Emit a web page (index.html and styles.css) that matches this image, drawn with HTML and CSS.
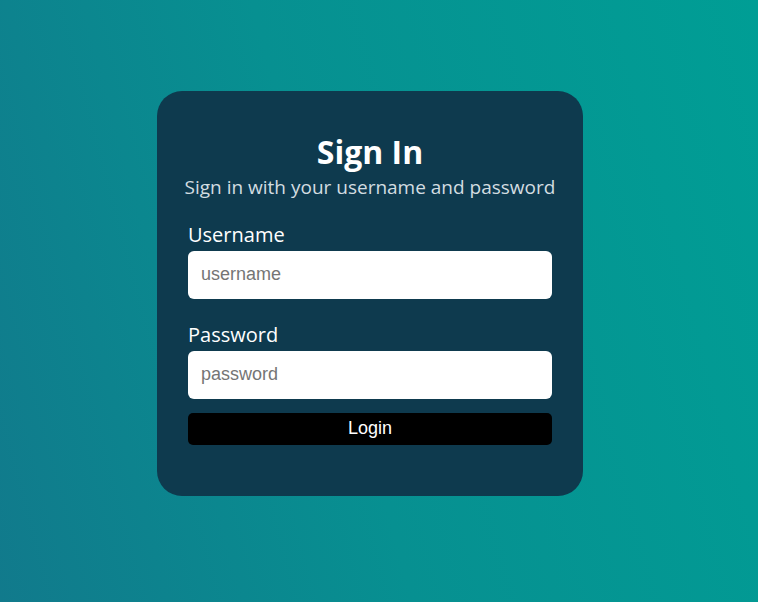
FILE: index.html
```html
<!DOCTYPE html>
<html lang="en">
<head>
<meta charset="utf-8">
<title>Sign In</title>
<link rel="stylesheet" href="styles.css">
</head>
<body>
<main class="page">
  <form class="card">
    <h1 class="title">Sign In</h1>
    <p class="subtitle">Sign in with your username and password</p>
    <label class="label" for="u">Username</label>
    <input class="field" id="u" type="text" placeholder="username">
    <label class="label label-second" for="p">Password</label>
    <input class="field" id="p" type="password" placeholder="password">
    <button class="btn" type="button">Login</button>
  </form>
</main>
</body>
</html>
```
FILE: styles.css
```css
html, body {
  margin: 0;
  padding: 0;
  height: 100%;
}
body {
  background: linear-gradient(75deg, #117a8c 0%, #079091 45%, #009e95 100%);
  font-family: "Open Sans", "Noto Sans", sans-serif;
}
.page {
  box-sizing: border-box;
  min-height: 100%;
  display: flex;
  align-items: flex-start;
  padding: 91px 0 0 157px;
}
.card {
  box-sizing: border-box;
  width: 426px;
  background: #0e3a4e;
  border-radius: 25px;
  padding: 41px 31px 51px;
  display: flex;
  flex-direction: column;
}
.title {
  margin: 0;
  font-size: 32px;
  line-height: 40px;
  font-weight: 700;
  color: #ffffff;
  text-align: center;
}
.subtitle {
  margin: 3px -16px 0;
  font-size: 19px;
  line-height: 24px;
  color: #d3dde1;
  text-align: center;
  white-space: nowrap;
}
.label {
  margin-top: 24px;
  font-size: 20px;
  line-height: 24px;
  color: #ffffff;
}
.label-second {
  margin-top: 24px;
}
.field {
  box-sizing: border-box;
  margin-top: 4px;
  width: 100%;
  height: 48px;
  border: none;
  border-radius: 6px;
  padding: 0 13px 2px;
  background: #ffffff;
  font-family: "Liberation Sans", Arial, sans-serif;
  font-size: 18px;
  color: #222;
  outline: none;
}
.field::placeholder {
  color: #757575;
}
.btn {
  margin-top: 14px;
  height: 32px;
  width: 100%;
  border: none;
  border-radius: 5px;
  background: #000000;
  color: #ffffff;
  font-family: "Liberation Sans", Arial, sans-serif;
  font-size: 18px;
  padding: 0 0 2px;
}
```
